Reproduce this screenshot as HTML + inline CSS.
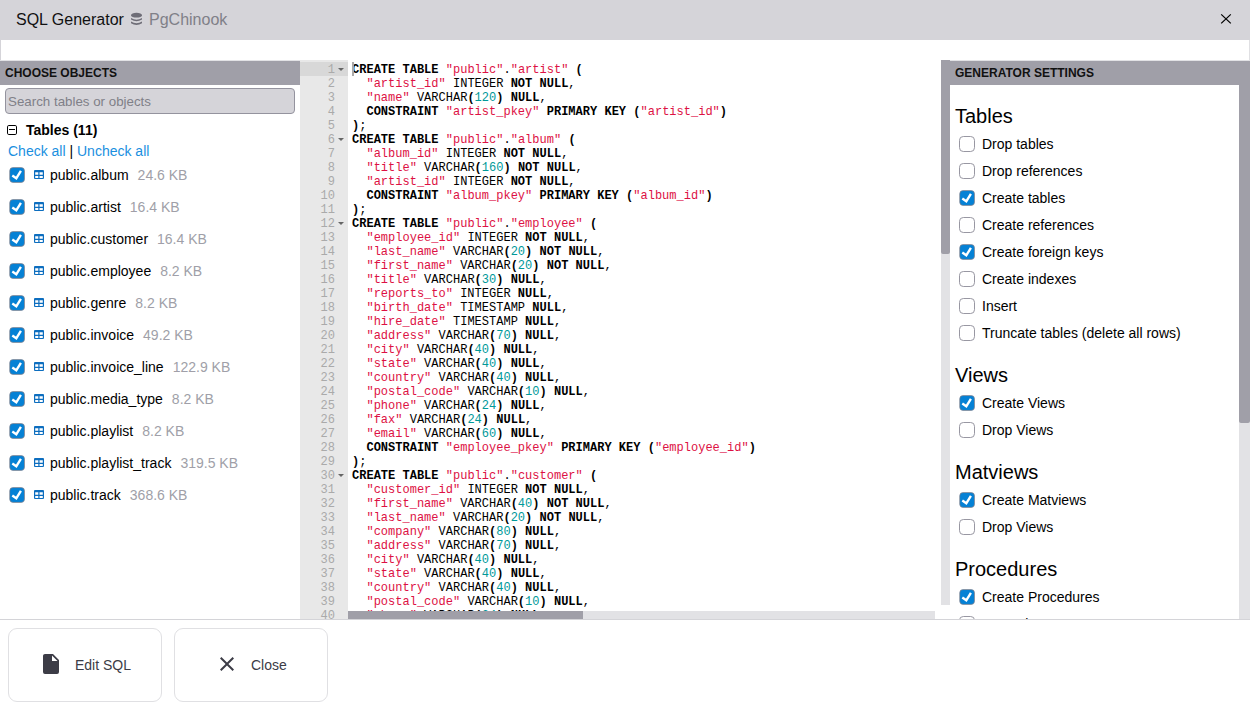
<!DOCTYPE html>
<html><head><meta charset="utf-8">
<style>
*{box-sizing:border-box}
html,body{margin:0;padding:0}
body{width:1250px;height:720px;overflow:hidden;position:relative;background:#fff;font-family:"Liberation Sans",sans-serif;font-size:14px;color:#000}
i,b{font-style:normal}
.a{position:absolute}
#hdr{left:0;top:0;width:1250px;height:40px;background:#d5d4d9}
#title{left:16px;top:11px;font-size:16px;line-height:18px;white-space:nowrap;color:#111}
#title2{left:149px;top:11px;font-size:16px;line-height:18px;white-space:nowrap;color:#808088}
#title .db{display:inline-block;vertical-align:top}
#title .cn{color:#808088}
#strip{left:0;top:40px;width:1250px;height:20px;background:#fff;border-left:1px solid #d5d4d9;border-right:1px solid #e0e0e3}
.wt{height:25px;background:#a09fa8;border-top:1px solid #e2e2e5;font-weight:bold;font-size:12px;line-height:23px;padding-top:1px;padding-left:5px;color:#111;white-space:nowrap}
#left{left:0;top:60px;width:300px;height:559px;background:#fff;overflow:hidden}
#search{left:5px;top:28px;width:290px;height:26px;background:#d5d4d9;border:1px solid #94939e;border-radius:4px;color:#808088;font-size:13.333px;line-height:24px;padding-top:1px;padding-left:2px}
#grp{left:6px;top:62px;font-weight:bold;white-space:nowrap}
#links{left:8px;top:83px;white-space:nowrap;color:#1a8fe0}
#links span{color:#000}
.it{position:absolute;left:0;height:16px;width:300px;white-space:nowrap}
.cb{position:absolute;display:block}
.it .cb{left:9px;top:0}
.it .ti{position:absolute;left:34px;top:3px}
.it .tn{position:absolute;left:50px;top:-1.5px;line-height:18px}
.it .sz{color:#a09fa8;margin-left:9px}
#editor{left:300px;top:60px;width:650px;height:559px;background:#fff;overflow:hidden}
#gutter{left:0;top:0;width:48px;height:559px;background:#e8e8e8;color:#aaa}
#gutter .gl{position:absolute;left:0;top:2px;width:48px}
.gn .t{position:relative;top:1px}
.gn{height:14px;line-height:14px;text-align:right;padding-right:13px;position:relative;font-family:"Liberation Mono",monospace;font-size:12px}
.gn.act{background:#d8d8d8}
.fw{position:absolute;right:4px;top:6px;width:0;height:0;border-left:3px solid transparent;border-right:3px solid transparent;border-top:3.5px solid #666}
#code{left:52px;top:3px;font-family:"Liberation Mono",monospace;font-size:12.03px;color:#000}
.ln{height:14px;line-height:14px;white-space:pre}
.s{color:#dd1144}
.n{color:#009999}
#cursor{left:52px;top:2px;width:1.5px;height:14px;background:#aaa}
#vs{left:641px;top:0;width:9px;height:545px;background:#e2e2e5}
#vst{left:0;top:0;width:9px;height:194px;background:#a09fa8;border-radius:0 0 2px 2px}
#hs{left:48px;top:551px;width:587px;height:8px;background:#e2e2e5}
#hst{left:0;top:0;width:235px;height:8px;background:#a09fa8}
#right{left:950px;top:60px;width:300px;height:559px;background:#fff;overflow:hidden}
#rs{left:289px;top:25px;width:11px;height:534px;background:#e2e2e5}
#rst{left:0;top:0;width:11px;height:338px;background:#a09fa8;border-radius:0 0 2px 2px}
.sh{position:absolute;left:5px;font-size:20px;line-height:23px;white-space:nowrap}
.sc{position:absolute;left:0;width:289px;height:16px;white-space:nowrap}
.sc .cb{left:9px;top:0}
.sc span{position:absolute;left:32px;top:-1.5px;line-height:18px}
#divider{left:0;top:619px;width:1250px;height:1px;background:#d4d4d8}
.btn{position:absolute;top:628px;width:154px;height:74px;border:1px solid #e0e0e3;border-radius:9px;background:#fff;color:#3c3c46}
.btn svg{position:absolute;top:23px}
.btn span{position:absolute;top:27px;line-height:18px;white-space:nowrap}
</style></head><body>
<div id="hdr" class="a">
  <div id="title" class="a">SQL Generator</div>
  <svg class="a" style="left:130px;top:12px" width="13" height="14" viewBox="0 0 13 14"><g fill="#6e6d77"><ellipse cx="6.5" cy="3.2" rx="5.5" ry="2.4"/><path d="M1 6.0 Q6.5 9.4 12 6.0 L12 7.6 Q6.5 11 1 7.6Z"/><path d="M1 9.6 Q6.5 13 12 9.6 L12 11.2 Q6.5 14.6 1 11.2Z"/></g></svg>
  <div id="title2" class="a">PgChinook</div>
  <svg class="a" style="left:1219px;top:13px" width="14" height="12" viewBox="0 0 14 12"><path d="M2.2 1.4 L11.8 10.4 M11.8 1.4 L2.2 10.4" stroke="#000" stroke-width="1.25"/></svg>
</div>
<div id="strip" class="a"></div>
<div id="left" class="a">
  <div class="wt">CHOOSE OBJECTS</div>
  <div id="search" class="a">Search tables or objects</div>
  <svg class="a" style="left:7px;top:65px" width="10" height="10" viewBox="0 0 10 10"><rect x="0.5" y="0.5" width="9" height="9" rx="1.3" fill="none" stroke="#000" stroke-width="1"/><path d="M2 4.5H8" stroke="#000" stroke-width="1"/></svg>
  <div id="grp" class="a" style="left:26px">Tables (11)</div>
  <div id="links" class="a">Check all <span>|</span> Uncheck all</div>
  <div class="a" style="left:0;top:-60px;width:300px;height:620px">
<div class="it" style="top:167px"><svg class="cb" width="17" height="17" viewBox="0 0 17 17"><rect x="0.7" y="0.55" width="14.8" height="14.9" rx="3.4" fill="#0581d5" stroke="#8a7f84" stroke-opacity="0.75" stroke-width="0.9"/><path d="M3.3 8.6 L7.3 11.3 L11.9 3.9" stroke="#fff" stroke-width="2.4" fill="none"/></svg><svg class="ti" width="10" height="9" viewBox="0 0 10 9"><path fill="#0d6ebf" fill-rule="evenodd" d="M1 0H9A1 1 0 0 1 10 1V8A1 1 0 0 1 9 9H1A1 1 0 0 1 0 8V1A1 1 0 0 1 1 0ZM1.2 2.3V4.7H4.3V2.3ZM5.5 2.3V4.7H8.8V2.3ZM1.2 6V8H4.3V6ZM5.5 6V8H8.8V6Z"/></svg><span class="tn">public.album<span class="sz">24.6 KB</span></span></div>
<div class="it" style="top:199px"><svg class="cb" width="17" height="17" viewBox="0 0 17 17"><rect x="0.7" y="0.55" width="14.8" height="14.9" rx="3.4" fill="#0581d5" stroke="#8a7f84" stroke-opacity="0.75" stroke-width="0.9"/><path d="M3.3 8.6 L7.3 11.3 L11.9 3.9" stroke="#fff" stroke-width="2.4" fill="none"/></svg><svg class="ti" width="10" height="9" viewBox="0 0 10 9"><path fill="#0d6ebf" fill-rule="evenodd" d="M1 0H9A1 1 0 0 1 10 1V8A1 1 0 0 1 9 9H1A1 1 0 0 1 0 8V1A1 1 0 0 1 1 0ZM1.2 2.3V4.7H4.3V2.3ZM5.5 2.3V4.7H8.8V2.3ZM1.2 6V8H4.3V6ZM5.5 6V8H8.8V6Z"/></svg><span class="tn">public.artist<span class="sz">16.4 KB</span></span></div>
<div class="it" style="top:231px"><svg class="cb" width="17" height="17" viewBox="0 0 17 17"><rect x="0.7" y="0.55" width="14.8" height="14.9" rx="3.4" fill="#0581d5" stroke="#8a7f84" stroke-opacity="0.75" stroke-width="0.9"/><path d="M3.3 8.6 L7.3 11.3 L11.9 3.9" stroke="#fff" stroke-width="2.4" fill="none"/></svg><svg class="ti" width="10" height="9" viewBox="0 0 10 9"><path fill="#0d6ebf" fill-rule="evenodd" d="M1 0H9A1 1 0 0 1 10 1V8A1 1 0 0 1 9 9H1A1 1 0 0 1 0 8V1A1 1 0 0 1 1 0ZM1.2 2.3V4.7H4.3V2.3ZM5.5 2.3V4.7H8.8V2.3ZM1.2 6V8H4.3V6ZM5.5 6V8H8.8V6Z"/></svg><span class="tn">public.customer<span class="sz">16.4 KB</span></span></div>
<div class="it" style="top:263px"><svg class="cb" width="17" height="17" viewBox="0 0 17 17"><rect x="0.7" y="0.55" width="14.8" height="14.9" rx="3.4" fill="#0581d5" stroke="#8a7f84" stroke-opacity="0.75" stroke-width="0.9"/><path d="M3.3 8.6 L7.3 11.3 L11.9 3.9" stroke="#fff" stroke-width="2.4" fill="none"/></svg><svg class="ti" width="10" height="9" viewBox="0 0 10 9"><path fill="#0d6ebf" fill-rule="evenodd" d="M1 0H9A1 1 0 0 1 10 1V8A1 1 0 0 1 9 9H1A1 1 0 0 1 0 8V1A1 1 0 0 1 1 0ZM1.2 2.3V4.7H4.3V2.3ZM5.5 2.3V4.7H8.8V2.3ZM1.2 6V8H4.3V6ZM5.5 6V8H8.8V6Z"/></svg><span class="tn">public.employee<span class="sz">8.2 KB</span></span></div>
<div class="it" style="top:295px"><svg class="cb" width="17" height="17" viewBox="0 0 17 17"><rect x="0.7" y="0.55" width="14.8" height="14.9" rx="3.4" fill="#0581d5" stroke="#8a7f84" stroke-opacity="0.75" stroke-width="0.9"/><path d="M3.3 8.6 L7.3 11.3 L11.9 3.9" stroke="#fff" stroke-width="2.4" fill="none"/></svg><svg class="ti" width="10" height="9" viewBox="0 0 10 9"><path fill="#0d6ebf" fill-rule="evenodd" d="M1 0H9A1 1 0 0 1 10 1V8A1 1 0 0 1 9 9H1A1 1 0 0 1 0 8V1A1 1 0 0 1 1 0ZM1.2 2.3V4.7H4.3V2.3ZM5.5 2.3V4.7H8.8V2.3ZM1.2 6V8H4.3V6ZM5.5 6V8H8.8V6Z"/></svg><span class="tn">public.genre<span class="sz">8.2 KB</span></span></div>
<div class="it" style="top:327px"><svg class="cb" width="17" height="17" viewBox="0 0 17 17"><rect x="0.7" y="0.55" width="14.8" height="14.9" rx="3.4" fill="#0581d5" stroke="#8a7f84" stroke-opacity="0.75" stroke-width="0.9"/><path d="M3.3 8.6 L7.3 11.3 L11.9 3.9" stroke="#fff" stroke-width="2.4" fill="none"/></svg><svg class="ti" width="10" height="9" viewBox="0 0 10 9"><path fill="#0d6ebf" fill-rule="evenodd" d="M1 0H9A1 1 0 0 1 10 1V8A1 1 0 0 1 9 9H1A1 1 0 0 1 0 8V1A1 1 0 0 1 1 0ZM1.2 2.3V4.7H4.3V2.3ZM5.5 2.3V4.7H8.8V2.3ZM1.2 6V8H4.3V6ZM5.5 6V8H8.8V6Z"/></svg><span class="tn">public.invoice<span class="sz">49.2 KB</span></span></div>
<div class="it" style="top:359px"><svg class="cb" width="17" height="17" viewBox="0 0 17 17"><rect x="0.7" y="0.55" width="14.8" height="14.9" rx="3.4" fill="#0581d5" stroke="#8a7f84" stroke-opacity="0.75" stroke-width="0.9"/><path d="M3.3 8.6 L7.3 11.3 L11.9 3.9" stroke="#fff" stroke-width="2.4" fill="none"/></svg><svg class="ti" width="10" height="9" viewBox="0 0 10 9"><path fill="#0d6ebf" fill-rule="evenodd" d="M1 0H9A1 1 0 0 1 10 1V8A1 1 0 0 1 9 9H1A1 1 0 0 1 0 8V1A1 1 0 0 1 1 0ZM1.2 2.3V4.7H4.3V2.3ZM5.5 2.3V4.7H8.8V2.3ZM1.2 6V8H4.3V6ZM5.5 6V8H8.8V6Z"/></svg><span class="tn">public.invoice_line<span class="sz">122.9 KB</span></span></div>
<div class="it" style="top:391px"><svg class="cb" width="17" height="17" viewBox="0 0 17 17"><rect x="0.7" y="0.55" width="14.8" height="14.9" rx="3.4" fill="#0581d5" stroke="#8a7f84" stroke-opacity="0.75" stroke-width="0.9"/><path d="M3.3 8.6 L7.3 11.3 L11.9 3.9" stroke="#fff" stroke-width="2.4" fill="none"/></svg><svg class="ti" width="10" height="9" viewBox="0 0 10 9"><path fill="#0d6ebf" fill-rule="evenodd" d="M1 0H9A1 1 0 0 1 10 1V8A1 1 0 0 1 9 9H1A1 1 0 0 1 0 8V1A1 1 0 0 1 1 0ZM1.2 2.3V4.7H4.3V2.3ZM5.5 2.3V4.7H8.8V2.3ZM1.2 6V8H4.3V6ZM5.5 6V8H8.8V6Z"/></svg><span class="tn">public.media_type<span class="sz">8.2 KB</span></span></div>
<div class="it" style="top:423px"><svg class="cb" width="17" height="17" viewBox="0 0 17 17"><rect x="0.7" y="0.55" width="14.8" height="14.9" rx="3.4" fill="#0581d5" stroke="#8a7f84" stroke-opacity="0.75" stroke-width="0.9"/><path d="M3.3 8.6 L7.3 11.3 L11.9 3.9" stroke="#fff" stroke-width="2.4" fill="none"/></svg><svg class="ti" width="10" height="9" viewBox="0 0 10 9"><path fill="#0d6ebf" fill-rule="evenodd" d="M1 0H9A1 1 0 0 1 10 1V8A1 1 0 0 1 9 9H1A1 1 0 0 1 0 8V1A1 1 0 0 1 1 0ZM1.2 2.3V4.7H4.3V2.3ZM5.5 2.3V4.7H8.8V2.3ZM1.2 6V8H4.3V6ZM5.5 6V8H8.8V6Z"/></svg><span class="tn">public.playlist<span class="sz">8.2 KB</span></span></div>
<div class="it" style="top:455px"><svg class="cb" width="17" height="17" viewBox="0 0 17 17"><rect x="0.7" y="0.55" width="14.8" height="14.9" rx="3.4" fill="#0581d5" stroke="#8a7f84" stroke-opacity="0.75" stroke-width="0.9"/><path d="M3.3 8.6 L7.3 11.3 L11.9 3.9" stroke="#fff" stroke-width="2.4" fill="none"/></svg><svg class="ti" width="10" height="9" viewBox="0 0 10 9"><path fill="#0d6ebf" fill-rule="evenodd" d="M1 0H9A1 1 0 0 1 10 1V8A1 1 0 0 1 9 9H1A1 1 0 0 1 0 8V1A1 1 0 0 1 1 0ZM1.2 2.3V4.7H4.3V2.3ZM5.5 2.3V4.7H8.8V2.3ZM1.2 6V8H4.3V6ZM5.5 6V8H8.8V6Z"/></svg><span class="tn">public.playlist_track<span class="sz">319.5 KB</span></span></div>
<div class="it" style="top:487px"><svg class="cb" width="17" height="17" viewBox="0 0 17 17"><rect x="0.7" y="0.55" width="14.8" height="14.9" rx="3.4" fill="#0581d5" stroke="#8a7f84" stroke-opacity="0.75" stroke-width="0.9"/><path d="M3.3 8.6 L7.3 11.3 L11.9 3.9" stroke="#fff" stroke-width="2.4" fill="none"/></svg><svg class="ti" width="10" height="9" viewBox="0 0 10 9"><path fill="#0d6ebf" fill-rule="evenodd" d="M1 0H9A1 1 0 0 1 10 1V8A1 1 0 0 1 9 9H1A1 1 0 0 1 0 8V1A1 1 0 0 1 1 0ZM1.2 2.3V4.7H4.3V2.3ZM5.5 2.3V4.7H8.8V2.3ZM1.2 6V8H4.3V6ZM5.5 6V8H8.8V6Z"/></svg><span class="tn">public.track<span class="sz">368.6 KB</span></span></div>
  </div>
</div>
<div id="editor" class="a">
  <div id="gutter" class="a"><div class="gl">
<div class="gn act"><span class="t">1</span><span class="fw"></span></div>
<div class="gn"><span class="t">2</span></div>
<div class="gn"><span class="t">3</span></div>
<div class="gn"><span class="t">4</span></div>
<div class="gn"><span class="t">5</span></div>
<div class="gn"><span class="t">6</span><span class="fw"></span></div>
<div class="gn"><span class="t">7</span></div>
<div class="gn"><span class="t">8</span></div>
<div class="gn"><span class="t">9</span></div>
<div class="gn"><span class="t">10</span></div>
<div class="gn"><span class="t">11</span></div>
<div class="gn"><span class="t">12</span><span class="fw"></span></div>
<div class="gn"><span class="t">13</span></div>
<div class="gn"><span class="t">14</span></div>
<div class="gn"><span class="t">15</span></div>
<div class="gn"><span class="t">16</span></div>
<div class="gn"><span class="t">17</span></div>
<div class="gn"><span class="t">18</span></div>
<div class="gn"><span class="t">19</span></div>
<div class="gn"><span class="t">20</span></div>
<div class="gn"><span class="t">21</span></div>
<div class="gn"><span class="t">22</span></div>
<div class="gn"><span class="t">23</span></div>
<div class="gn"><span class="t">24</span></div>
<div class="gn"><span class="t">25</span></div>
<div class="gn"><span class="t">26</span></div>
<div class="gn"><span class="t">27</span></div>
<div class="gn"><span class="t">28</span></div>
<div class="gn"><span class="t">29</span></div>
<div class="gn"><span class="t">30</span><span class="fw"></span></div>
<div class="gn"><span class="t">31</span></div>
<div class="gn"><span class="t">32</span></div>
<div class="gn"><span class="t">33</span></div>
<div class="gn"><span class="t">34</span></div>
<div class="gn"><span class="t">35</span></div>
<div class="gn"><span class="t">36</span></div>
<div class="gn"><span class="t">37</span></div>
<div class="gn"><span class="t">38</span></div>
<div class="gn"><span class="t">39</span></div>
<div class="gn"><span class="t">40</span></div>
  </div></div>
  <div id="code" class="a">
<div class="ln"><b>CREATE</b> <b>TABLE</b> <i class="s">"public"</i>.<i class="s">"artist"</i> <b>(</b></div>
<div class="ln">  <i class="s">"artist_id"</i> INTEGER <b>NOT</b> <b>NULL</b>,</div>
<div class="ln">  <i class="s">"name"</i> VARCHAR<b>(</b><i class="n">120</i><b>)</b> <b>NULL</b>,</div>
<div class="ln">  <b>CONSTRAINT</b> <i class="s">"artist_pkey"</i> <b>PRIMARY</b> <b>KEY</b> <b>(</b><i class="s">"artist_id"</i><b>)</b></div>
<div class="ln"><b>)</b>;</div>
<div class="ln"><b>CREATE</b> <b>TABLE</b> <i class="s">"public"</i>.<i class="s">"album"</i> <b>(</b></div>
<div class="ln">  <i class="s">"album_id"</i> INTEGER <b>NOT</b> <b>NULL</b>,</div>
<div class="ln">  <i class="s">"title"</i> VARCHAR<b>(</b><i class="n">160</i><b>)</b> <b>NOT</b> <b>NULL</b>,</div>
<div class="ln">  <i class="s">"artist_id"</i> INTEGER <b>NOT</b> <b>NULL</b>,</div>
<div class="ln">  <b>CONSTRAINT</b> <i class="s">"album_pkey"</i> <b>PRIMARY</b> <b>KEY</b> <b>(</b><i class="s">"album_id"</i><b>)</b></div>
<div class="ln"><b>)</b>;</div>
<div class="ln"><b>CREATE</b> <b>TABLE</b> <i class="s">"public"</i>.<i class="s">"employee"</i> <b>(</b></div>
<div class="ln">  <i class="s">"employee_id"</i> INTEGER <b>NOT</b> <b>NULL</b>,</div>
<div class="ln">  <i class="s">"last_name"</i> VARCHAR<b>(</b><i class="n">20</i><b>)</b> <b>NOT</b> <b>NULL</b>,</div>
<div class="ln">  <i class="s">"first_name"</i> VARCHAR<b>(</b><i class="n">20</i><b>)</b> <b>NOT</b> <b>NULL</b>,</div>
<div class="ln">  <i class="s">"title"</i> VARCHAR<b>(</b><i class="n">30</i><b>)</b> <b>NULL</b>,</div>
<div class="ln">  <i class="s">"reports_to"</i> INTEGER <b>NULL</b>,</div>
<div class="ln">  <i class="s">"birth_date"</i> TIMESTAMP <b>NULL</b>,</div>
<div class="ln">  <i class="s">"hire_date"</i> TIMESTAMP <b>NULL</b>,</div>
<div class="ln">  <i class="s">"address"</i> VARCHAR<b>(</b><i class="n">70</i><b>)</b> <b>NULL</b>,</div>
<div class="ln">  <i class="s">"city"</i> VARCHAR<b>(</b><i class="n">40</i><b>)</b> <b>NULL</b>,</div>
<div class="ln">  <i class="s">"state"</i> VARCHAR<b>(</b><i class="n">40</i><b>)</b> <b>NULL</b>,</div>
<div class="ln">  <i class="s">"country"</i> VARCHAR<b>(</b><i class="n">40</i><b>)</b> <b>NULL</b>,</div>
<div class="ln">  <i class="s">"postal_code"</i> VARCHAR<b>(</b><i class="n">10</i><b>)</b> <b>NULL</b>,</div>
<div class="ln">  <i class="s">"phone"</i> VARCHAR<b>(</b><i class="n">24</i><b>)</b> <b>NULL</b>,</div>
<div class="ln">  <i class="s">"fax"</i> VARCHAR<b>(</b><i class="n">24</i><b>)</b> <b>NULL</b>,</div>
<div class="ln">  <i class="s">"email"</i> VARCHAR<b>(</b><i class="n">60</i><b>)</b> <b>NULL</b>,</div>
<div class="ln">  <b>CONSTRAINT</b> <i class="s">"employee_pkey"</i> <b>PRIMARY</b> <b>KEY</b> <b>(</b><i class="s">"employee_id"</i><b>)</b></div>
<div class="ln"><b>)</b>;</div>
<div class="ln"><b>CREATE</b> <b>TABLE</b> <i class="s">"public"</i>.<i class="s">"customer"</i> <b>(</b></div>
<div class="ln">  <i class="s">"customer_id"</i> INTEGER <b>NOT</b> <b>NULL</b>,</div>
<div class="ln">  <i class="s">"first_name"</i> VARCHAR<b>(</b><i class="n">40</i><b>)</b> <b>NOT</b> <b>NULL</b>,</div>
<div class="ln">  <i class="s">"last_name"</i> VARCHAR<b>(</b><i class="n">20</i><b>)</b> <b>NOT</b> <b>NULL</b>,</div>
<div class="ln">  <i class="s">"company"</i> VARCHAR<b>(</b><i class="n">80</i><b>)</b> <b>NULL</b>,</div>
<div class="ln">  <i class="s">"address"</i> VARCHAR<b>(</b><i class="n">70</i><b>)</b> <b>NULL</b>,</div>
<div class="ln">  <i class="s">"city"</i> VARCHAR<b>(</b><i class="n">40</i><b>)</b> <b>NULL</b>,</div>
<div class="ln">  <i class="s">"state"</i> VARCHAR<b>(</b><i class="n">40</i><b>)</b> <b>NULL</b>,</div>
<div class="ln">  <i class="s">"country"</i> VARCHAR<b>(</b><i class="n">40</i><b>)</b> <b>NULL</b>,</div>
<div class="ln">  <i class="s">"postal_code"</i> VARCHAR<b>(</b><i class="n">10</i><b>)</b> <b>NULL</b>,</div>
<div class="ln">  <i class="s">"phone"</i> VARCHAR<b>(</b><i class="n">24</i><b>)</b> <b>NULL</b>,</div>
  </div>
  <div id="cursor" class="a"></div>
  <div id="vs" class="a"><div id="vst" class="a"></div></div>
  <div id="hs" class="a"><div id="hst" class="a"></div></div>
</div>
<div id="right" class="a">
  <div class="wt">GENERATOR SETTINGS</div>
  <div class="a" style="left:0;top:-60px;width:289px;height:620px">
<div class="sh" style="top:105px">Tables</div>
<div class="sc" style="top:136px"><svg class="cb" width="17" height="17" viewBox="0 0 17 17"><rect x="0.5" y="0.5" width="15" height="15" rx="3.8" fill="#fff" stroke="#9897a2" stroke-width="1"/></svg><span>Drop tables</span></div>
<div class="sc" style="top:163px"><svg class="cb" width="17" height="17" viewBox="0 0 17 17"><rect x="0.5" y="0.5" width="15" height="15" rx="3.8" fill="#fff" stroke="#9897a2" stroke-width="1"/></svg><span>Drop references</span></div>
<div class="sc" style="top:190px"><svg class="cb" width="17" height="17" viewBox="0 0 17 17"><rect x="0.7" y="0.55" width="14.8" height="14.9" rx="3.4" fill="#0581d5" stroke="#8a7f84" stroke-opacity="0.75" stroke-width="0.9"/><path d="M3.3 8.6 L7.3 11.3 L11.9 3.9" stroke="#fff" stroke-width="2.4" fill="none"/></svg><span>Create tables</span></div>
<div class="sc" style="top:217px"><svg class="cb" width="17" height="17" viewBox="0 0 17 17"><rect x="0.5" y="0.5" width="15" height="15" rx="3.8" fill="#fff" stroke="#9897a2" stroke-width="1"/></svg><span>Create references</span></div>
<div class="sc" style="top:244px"><svg class="cb" width="17" height="17" viewBox="0 0 17 17"><rect x="0.7" y="0.55" width="14.8" height="14.9" rx="3.4" fill="#0581d5" stroke="#8a7f84" stroke-opacity="0.75" stroke-width="0.9"/><path d="M3.3 8.6 L7.3 11.3 L11.9 3.9" stroke="#fff" stroke-width="2.4" fill="none"/></svg><span>Create foreign keys</span></div>
<div class="sc" style="top:271px"><svg class="cb" width="17" height="17" viewBox="0 0 17 17"><rect x="0.5" y="0.5" width="15" height="15" rx="3.8" fill="#fff" stroke="#9897a2" stroke-width="1"/></svg><span>Create indexes</span></div>
<div class="sc" style="top:298px"><svg class="cb" width="17" height="17" viewBox="0 0 17 17"><rect x="0.5" y="0.5" width="15" height="15" rx="3.8" fill="#fff" stroke="#9897a2" stroke-width="1"/></svg><span>Insert</span></div>
<div class="sc" style="top:325px"><svg class="cb" width="17" height="17" viewBox="0 0 17 17"><rect x="0.5" y="0.5" width="15" height="15" rx="3.8" fill="#fff" stroke="#9897a2" stroke-width="1"/></svg><span>Truncate tables (delete all rows)</span></div>
<div class="sh" style="top:364px">Views</div>
<div class="sc" style="top:395px"><svg class="cb" width="17" height="17" viewBox="0 0 17 17"><rect x="0.7" y="0.55" width="14.8" height="14.9" rx="3.4" fill="#0581d5" stroke="#8a7f84" stroke-opacity="0.75" stroke-width="0.9"/><path d="M3.3 8.6 L7.3 11.3 L11.9 3.9" stroke="#fff" stroke-width="2.4" fill="none"/></svg><span>Create Views</span></div>
<div class="sc" style="top:422px"><svg class="cb" width="17" height="17" viewBox="0 0 17 17"><rect x="0.5" y="0.5" width="15" height="15" rx="3.8" fill="#fff" stroke="#9897a2" stroke-width="1"/></svg><span>Drop Views</span></div>
<div class="sh" style="top:461px">Matviews</div>
<div class="sc" style="top:492px"><svg class="cb" width="17" height="17" viewBox="0 0 17 17"><rect x="0.7" y="0.55" width="14.8" height="14.9" rx="3.4" fill="#0581d5" stroke="#8a7f84" stroke-opacity="0.75" stroke-width="0.9"/><path d="M3.3 8.6 L7.3 11.3 L11.9 3.9" stroke="#fff" stroke-width="2.4" fill="none"/></svg><span>Create Matviews</span></div>
<div class="sc" style="top:519px"><svg class="cb" width="17" height="17" viewBox="0 0 17 17"><rect x="0.5" y="0.5" width="15" height="15" rx="3.8" fill="#fff" stroke="#9897a2" stroke-width="1"/></svg><span>Drop Views</span></div>
<div class="sh" style="top:558px">Procedures</div>
<div class="sc" style="top:589px"><svg class="cb" width="17" height="17" viewBox="0 0 17 17"><rect x="0.7" y="0.55" width="14.8" height="14.9" rx="3.4" fill="#0581d5" stroke="#8a7f84" stroke-opacity="0.75" stroke-width="0.9"/><path d="M3.3 8.6 L7.3 11.3 L11.9 3.9" stroke="#fff" stroke-width="2.4" fill="none"/></svg><span>Create Procedures</span></div>
<div class="sc" style="top:616px"><svg class="cb" width="17" height="17" viewBox="0 0 17 17"><rect x="0.5" y="0.5" width="15" height="15" rx="3.8" fill="#fff" stroke="#9897a2" stroke-width="1"/></svg><span>Drop Views</span></div>
  </div>
  <div id="rs" class="a"><div id="rst" class="a"></div></div>
</div>
<div id="divider" class="a"></div>
<div class="btn" style="left:8px">
  <svg style="left:30px" width="24" height="24" viewBox="0 0 24 24"><path fill="#3c3c46" d="M13,9V3.5L18.5,9M6,2C4.89,2 4,2.89 4,4V20A2,2 0 0,0 6,22H18A2,2 0 0,0 20,20V8L14,2H6Z"/></svg>
  <span style="left:66px">Edit SQL</span>
</div>
<div class="btn" style="left:174px">
  <svg style="left:40px" width="24" height="24" viewBox="0 0 24 24"><path fill="#3c3c46" d="M19,6.41L17.59,5L12,10.59L6.41,5L5,6.41L10.59,12L5,17.59L6.41,19L12,13.41L17.59,19L19,17.59L13.41,12L19,6.41Z"/></svg>
  <span style="left:76px">Close</span>
</div>
</body></html>
